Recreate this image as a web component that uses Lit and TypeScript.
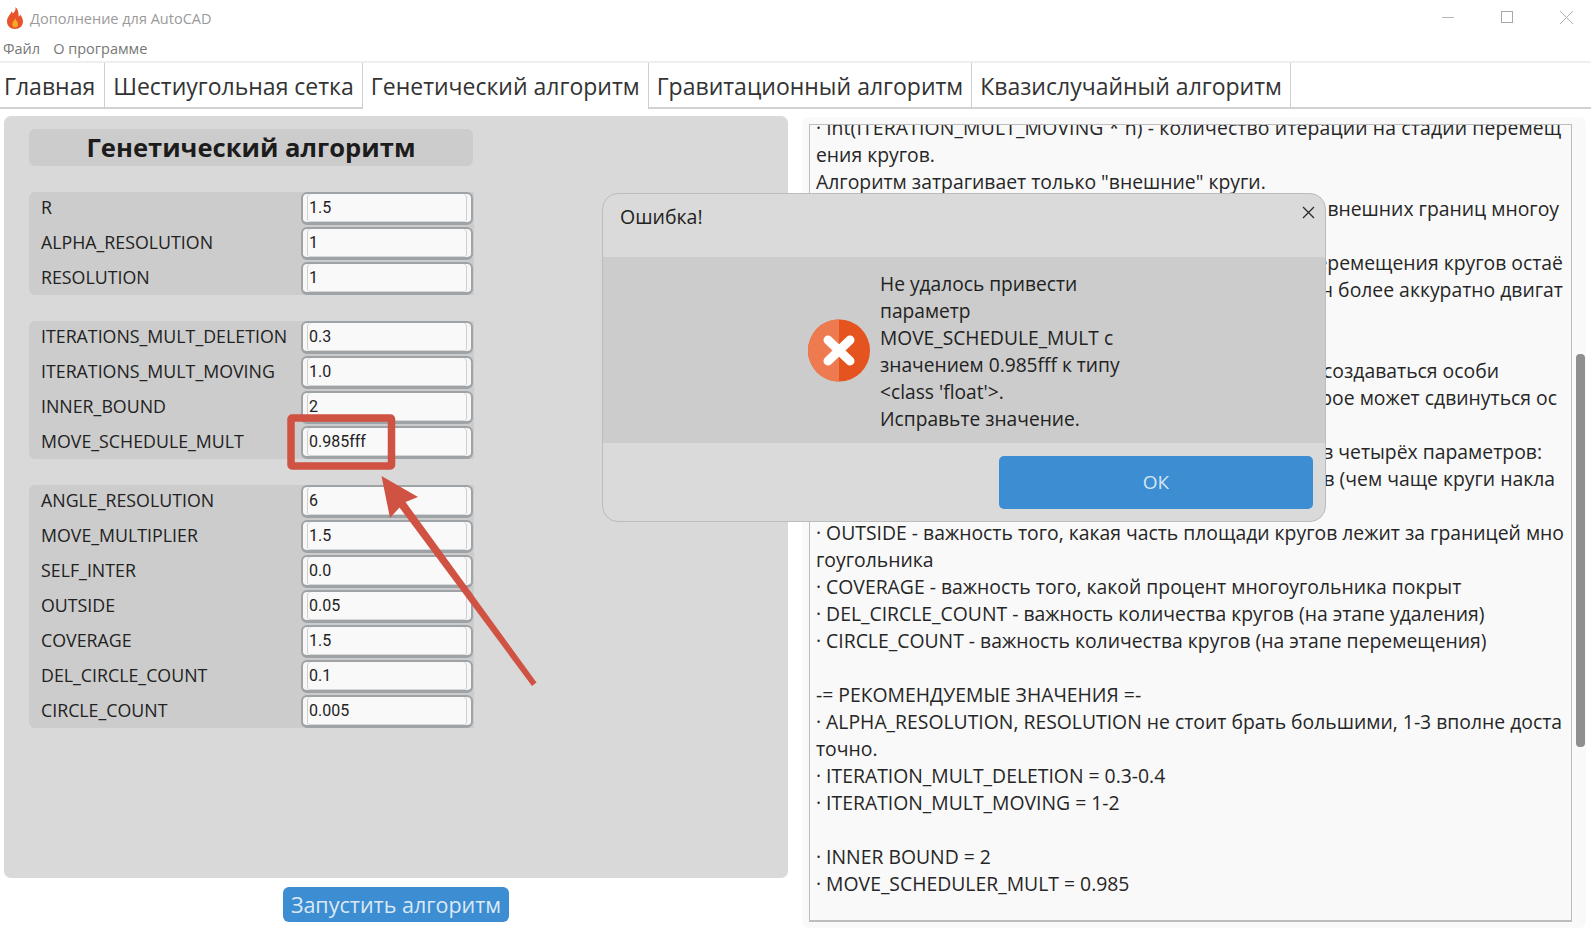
import { LitElement, html, css } from "lit";
import { customElement } from "lit/decorators.js";

const groups: [string, string][][] = [
  [["R", "1.5"], ["ALPHA_RESOLUTION", "1"], ["RESOLUTION", "1"]],
  [["ITERATIONS_MULT_DELETION", "0.3"], ["ITERATIONS_MULT_MOVING", "1.0"], ["INNER_BOUND", "2"], ["MOVE_SCHEDULE_MULT", "0.985fff"]],
  [["ANGLE_RESOLUTION", "6"], ["MOVE_MULTIPLIER", "1.5"], ["SELF_INTER", "0.0"], ["OUTSIDE", "0.05"], ["COVERAGE", "1.5"], ["DEL_CIRCLE_COUNT", "0.1"], ["CIRCLE_COUNT", "0.005"]],
];

const tabs = ["Главная", "Шестиугольная сетка", "Генетический алгоритм", "Гравитационный алгоритм", "Квазислучайный алгоритм"];

// [text, right inset in px when the line only shows its tail beside the dialog]
const lines: [string, number?][] = [
  ["· int(ITERATION_MULT_MOVING * n) - количество итераций на стадии перемещ"],
  ["ения кругов."],
  ['Алгоритм затрагивает только "внешние" круги.'],
  ["внешних границ многоу", 6],
  [""],
  ["перемещения кругов остаё", 2],
  ["он более аккуратно двигат", 2],
  [""],
  [""],
  ["создаваться особи", 66],
  ["которое может сдвинуться ос", 8],
  [""],
  ["в четырёх параметров:", 23],
  ["ов (чем чаще круги накла", 10],
  [""],
  ["· OUTSIDE - важность того, какая часть площади кругов лежит за границей мно"],
  ["гоугольника"],
  ["· COVERAGE - важность того, какой процент многоугольника покрыт"],
  ["· DEL_CIRCLE_COUNT - важность количества кругов (на этапе удаления)"],
  ["· CIRCLE_COUNT - важность количества кругов (на этапе перемещения)"],
  [""],
  ["-= РЕКОМЕНДУЕМЫЕ ЗНАЧЕНИЯ =-"],
  ["· ALPHA_RESOLUTION, RESOLUTION не стоит брать большими, 1-3 вполне доста"],
  ["точно."],
  ["· ITERATION_MULT_DELETION = 0.3-0.4"],
  ["· ITERATION_MULT_MOVING = 1-2"],
  [""],
  ["· INNER BOUND = 2"],
  ["· MOVE_SCHEDULER_MULT = 0.985"],
];

const message = ["Не удалось привести", "параметр", "MOVE_SCHEDULE_MULT с", "значением 0.985fff к типу", "<class 'float'>.", "Исправьте значение."];

@customElement("app-root")
export class AppRoot extends LitElement {
  static styles = css`
    :host {
      display: block;
      position: relative;
      width: 1591px;
      height: 934px;
      overflow: hidden;
      background: #fff;
      font-family: "Open Sans", "Noto Sans", sans-serif;
      color: #222;
    }
    .titlebar {
      height: 36px;
      display: flex;
      align-items: center;
      padding-left: 6px;
      color: #9a9a9a;
      font-size: 14.5px;
    }
    .flame { width: 18px; height: 22px; margin-right: 6px; flex: none; }
    .winctl { margin-left: auto; display: flex; gap: 42px; padding: 0 16px 2px 0; }
    .winctl svg { display: block; width: 17px; height: 17px; }
    .menu {
      height: 25px;
      display: flex;
      align-items: center;
      gap: 13px;
      padding-left: 3px;
      color: #777;
      font-size: 14.5px;
      border-bottom: 2px solid #efefef;
    }
    .tabs {
      height: 44px;
      display: flex;
      border-bottom: 2px solid #d2d2d2;
    }
    .tab {
      height: 46px;
      box-sizing: border-box;
      padding: 0 8px;
      display: flex;
      align-items: center;
      font-size: 23px;
      color: #333;
      border-right: 1px solid #cfcfcf;
      white-space: nowrap;
    }
    .tab.first { padding: 0 9px 0 4px; }
    .tab.on { background: #fff; position: relative; z-index: 1; }
    .main {
      display: grid;
      grid-template-columns: 784px 784px;
      column-gap: 14px;
      padding: 7px 0 0 4px;
    }
    .panel {
      height: 762px;
      box-sizing: border-box;
      background: #d9d9d9;
      border-radius: 7px;
      padding: 13px 0 0 25px;
    }
    .heading {
      width: 444px;
      height: 37px;
      background: #cccccc;
      border-radius: 6px;
      display: flex;
      align-items: center;
      justify-content: center;
      font-size: 25.6px;
      font-weight: 700;
      color: #1c1c1c;
      margin-bottom: 26px;
    }
    .group {
      width: 445px;
      background: #cccccc;
      border-radius: 6px 0 0 6px;
      display: flex;
      flex-direction: column;
      gap: 2px;
      margin-bottom: 26px;
    }
    .row {
      height: 33px;
      display: grid;
      grid-template-columns: 272px 172px;
      align-items: center;
    }
    .label {
      padding: 0 0 3px 12px;
      font-size: 17.8px;
      color: #222;
      white-space: nowrap;
    }
    .input {
      height: 33px;
      box-sizing: border-box;
      border: 2px solid #9ea3a8;
      border-bottom-width: 3px;
      border-radius: 6px;
      background: #f9f9f9;
      padding: 0 5px 2px 6px;
      display: flex;
      align-items: center;
      font-family: Roboto, "Liberation Sans", sans-serif;
      font-size: 16px;
      color: #222;
      box-shadow:
        inset 4px 0 0 #f7f7f7, inset 5px 0 0 #cfcfcf,
        inset -4px 0 0 #f7f7f7, inset -5px 0 0 #cfcfcf,
        inset 0 -1px 0 #d6d6d6;
    }
    .run {
      display: block;
      margin: 9px auto 0;
      width: 226px;
      height: 35px;
      border: none;
      border-radius: 6px;
      background: #3c8dd2;
      color: #dbe9f5;
      font: inherit;
      font-size: 21.5px;
      padding: 0;
    }
    .right {
      height: 811px;
      margin-top: 1px;
      box-sizing: border-box;
      background: #f9f9f9;
      border-radius: 7px;
      padding: 7px 0 0 7px;
      display: flex;
    }
    .textbox {
      width: 763px;
      height: 798px;
      box-sizing: border-box;
      border: 1px solid #bdbdbd;
      border-bottom-width: 2px;
      overflow: hidden;
      padding: 0 6px;
      font-size: 19.36px;
      line-height: 27px;
      color: #262626;
    }
    .scrolled { margin-top: -11px; }
    .line { height: 27px; white-space: pre; }
    .line:first-child { letter-spacing: 0.15px; }
    .line.tail { text-align: right; }
    .gutter { flex: 1; padding: 230px 0 0 4px; }
    .thumb { width: 9px; height: 393px; background: #8f8f8f; border-radius: 4px; }
    .overlay { position: absolute; left: 0; top: 0; pointer-events: none; }
    .dialog {
      position: absolute;
      left: 602px;
      top: 193px;
      width: 724px;
      height: 329px;
      box-sizing: border-box;
      background: #dadada;
      border: 1px solid #bcbcbc;
      border-radius: 16px;
      display: flex;
      flex-direction: column;
      overflow: hidden;
    }
    .dhead {
      height: 63px;
      box-sizing: border-box;
      padding: 8px 10px 0 17px;
      display: flex;
      justify-content: space-between;
      font-size: 19.5px;
      line-height: 30px;
      color: #222;
    }
    .dhead svg { width: 13px; height: 13px; margin-top: 4px; }
    .dbody {
      height: 186px;
      box-sizing: border-box;
      padding: 1px 0 0 205px;
      background: #cccccc;
      display: flex;
      align-items: center;
      gap: 10px;
    }
    .dicon { width: 62px; height: 63px; flex: none; }
    .dtext { font-size: 19.2px; line-height: 27px; color: #222; white-space: pre; }
    .dfoot { flex: 1; display: flex; justify-content: flex-end; padding: 13px 12px 0 0; }
    .ok {
      width: 314px;
      height: 53px;
      border: none;
      border-radius: 5px;
      background: #3c8dd2;
      color: #d5e5f3;
      font: inherit;
      font-size: 19px;
      padding: 0 0 2px;
    }
  `;

  private renderRow([name, value]: [string, string]) {
    return html`<div class="row">
      <div class="label">${name}</div>
      <div class="input">${value}</div>
    </div>`;
  }

  render() {
    return html`
      <div class="titlebar">
        <svg class="flame" viewBox="0 0 18 22">
          <path fill="#e8532a" d="M9.5 0c.6 3-1 4.6-2.6 6.6-.5-.9-.9-1.5-1.6-2C4.900 7.500 1 10 1 14.500 1 19 4.500 22 9 22s8-3 8-7.500c0-3-1.500-5-2.800-7-.3 1-.8 1.800-1.600 2.300C12.800 6 12.300 2.500 9.500 0z"/>
          <path fill="#f9a825" d="M9.200 11c.2 1.800-2.900 3.500-2.900 6.200 0 2 1.200 3.300 2.800 3.300s2.900-1.300 2.900-3.300c0-2.500-2.300-3.700-2.800-6.200z"/>
        </svg>
        <span>Дополнение для AutoCAD</span>
        <div class="winctl">
          <svg viewBox="0 0 17 17"><path d="M2 8.500h12" stroke="#b5b5b5" stroke-width="1" fill="none"/></svg>
          <svg viewBox="0 0 17 17"><rect x="2.500" y="2.500" width="11" height="11" stroke="#a8a8a8" stroke-width="1" fill="none"/></svg>
          <svg viewBox="0 0 17 17"><path d="M2 2l13 13M15 2L2 15" stroke="#b0b0b0" stroke-width="1" fill="none"/></svg>
        </div>
      </div>
      <div class="menu"><span>Файл</span><span>О программе</span></div>
      <div class="tabs">
        ${tabs.map((t, i) => html`<div class="tab ${i === 0 ? "first" : ""} ${i === 2 ? "on" : ""}">${t}</div>`)}
      </div>
      <div class="main">
        <div>
          <div class="panel">
            <div class="heading">Генетический алгоритм</div>
            ${groups.map((g) => html`<div class="group">${g.map((r) => this.renderRow(r))}</div>`)}
          </div>
          <button class="run">Запустить алгоритм</button>
        </div>
        <div class="right">
          <div class="textbox">
            <div class="scrolled">
              ${lines.map(([t, inset]) => inset === undefined
                ? html`<div class="line">${t}</div>`
                : html`<div class="line tail" style="padding-right:${inset}px">${t}</div>`)}
            </div>
          </div>
          <div class="gutter"><div class="thumb"></div></div>
        </div>
      </div>

      <svg class="overlay" width="1591" height="934">
        <rect x="291" y="418" width="100.500" height="48" rx="1" fill="none" stroke="#d05243" stroke-width="7.500"/>
        <path fill="#d05243" d="M381.500 476L418 497 405.500 502 536.500 682.500 532 686 399.500 507.500 390 518z"/>
      </svg>

      <div class="dialog">
        <div class="dhead">
          <span>Ошибка!</span>
          <svg viewBox="0 0 13 13"><path d="M1 1l11 11M12 1L1 12" stroke="#2a2a2a" stroke-width="1.300" fill="none"/></svg>
        </div>
        <div class="dbody">
          <svg class="dicon" viewBox="0 0 62 63">
            <circle cx="31" cy="31.500" r="31" fill="#e5531e"/>
            <path fill="#ee7a4f" d="M31 .5a31 31 0 0 0 0 62z"/>
            <path d="M20 21l22 21M42 21L20 42" stroke="#fff" stroke-width="9" stroke-linecap="round" fill="none"/>
          </svg>
          <div class="dtext">${message.join("\n")}</div>
        </div>
        <div class="dfoot"><button class="ok">ОК</button></div>
      </div>
    `;
  }
}
